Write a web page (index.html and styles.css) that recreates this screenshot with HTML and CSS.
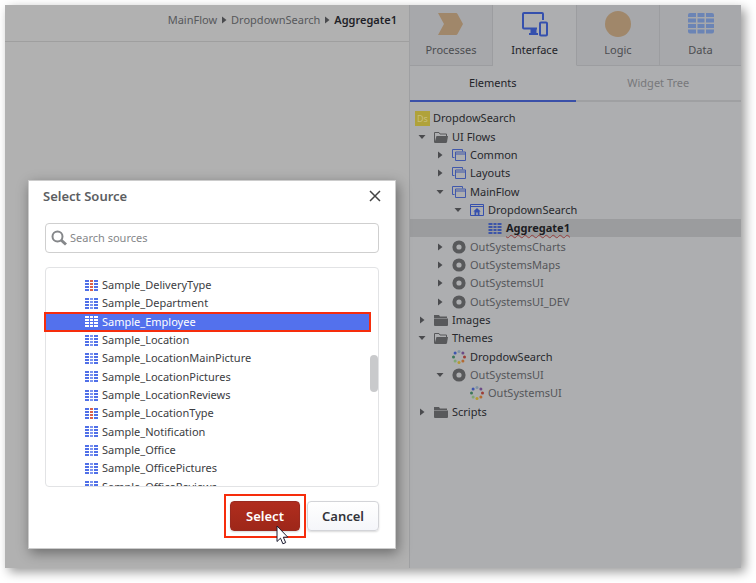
FILE: index.html
```html
<!DOCTYPE html>
<html lang="en">
<head>
    <meta charset="UTF-8">
    <meta name="viewport" content="width=device-width, initial-scale=1.0">
    <title>Select Source</title>
    <link rel="stylesheet" href="styles.css">
</head>
<body>
    <svg class="sprite" aria-hidden="true">
        <symbol id="right" viewBox="0 0 10 10"><path d="M3 1.5 7.5 5 3 8.5z" fill="currentColor"/></symbol>
        <symbol id="down" viewBox="0 0 10 10"><path d="M1.5 3h7L5 7z" fill="currentColor"/></symbol>
        <symbol id="folder" viewBox="0 0 14 14"><path d="M0 2h5l1 1.5h7V5H0zM0 5.5h14V12q0 1-1 1H1q-1 0-1-1z" fill="#58595b"/></symbol>
        <symbol id="folder-open" viewBox="0 0 14 14"><path d="M.5 12.500V2.500H5L6 4h6.500v2" fill="none" stroke="#58595b"/><path d="M2.500 6H14l-1 6q-.3 1-1.200 1H.5z" fill="#58595b"/></symbol>
        <symbol id="flow" viewBox="0 0 14 14"><path d="M2.500 9.500h-2v-8h10v2M3.500 4h10v8.500h-10zM3.500 6h10" fill="none" stroke="#4158ab"/></symbol>
        <symbol id="screen" viewBox="0 0 14 14"><path d="M.5 1.500h13v11H.5zM.5 3.500h13" fill="none" stroke="#3650ad"/><path d="M7 5 3.300 8.500h1.200V12h1.800V9.500h1.400V12h1.800V8.500h1.200z" fill="#3650ad"/></symbol>
        <symbol id="module" viewBox="0 0 14 14"><circle cx="7" cy="7" r="4.600" fill="none" stroke="#58595b" stroke-width="4"/></symbol>
        <symbol id="theme" viewBox="0 0 14 14">
            <circle cx="7" cy="1.500" r="1.500" fill="#8093a5"/><circle cx="10.900" cy="3.100" r="1.500" fill="#6c4b86"/>
            <circle cx="12.500" cy="7" r="1.500" fill="#9c3c35"/><circle cx="10.900" cy="10.900" r="1.500" fill="#b36a32"/>
            <circle cx="7" cy="12.500" r="1.500" fill="#b49a30"/><circle cx="3.100" cy="10.900" r="1.500" fill="#80a875"/>
            <circle cx="1.500" cy="7" r="1.500" fill="#3b7658"/><circle cx="3.100" cy="3.100" r="1.500" fill="#3d54ae"/>
        </symbol>
        <symbol id="grid" viewBox="0 0 13 11">
            <path d="M0 0h4v2H0zM9 0h4v2H9zM0 3h4v2H0zM9 3h4v2H9zM0 6h4v2H0zM9 6h4v2H9zM0 9h4v2H0zM9 9h4v2H9z" fill="currentColor"/>
            <path d="M5 0h3v2H5zM5 3h3v2H5zM5 6h3v2H5zM5 9h3v2H5z"/>
        </symbol>
    </svg>

    <div class="window">
        <main class="canvas">
            <nav class="breadcrumb" aria-label="Breadcrumb">
                <a href="#">MainFlow</a>
                <svg class="arrow"><use href="#right"/></svg>
                <a href="#">DropdownSearch</a>
                <svg class="arrow"><use href="#right"/></svg>
                <a href="#" class="current">Aggregate1</a>
            </nav>
        </main>

        <aside class="panel">
            <div class="layers">
                <button type="button" class="layer">
                    <svg width="28" height="26" viewBox="0 0 28 26"><path d="M1 2h18q1 0 1.500 1L26 13l-5.500 10q-.5 1-1.500 1H1l6-11z" fill="#a0876a"/></svg>
                    Processes
                </button>
                <button type="button" class="layer active">
                    <svg width="28" height="26" viewBox="0 0 28 26" fill="none" stroke="#3550ad" stroke-width="2"><path d="M16 17.500H3q-1 0-1-1V3q0-1 1-1h18q1 0 1 1v6M8 23h9M12.500 18v5M10.500 18v4M14.500 18v4"/><rect x="19" y="11.500" width="7" height="13" rx="1"/></svg>
                    Interface
                </button>
                <button type="button" class="layer">
                    <svg width="28" height="26" viewBox="0 0 28 26"><circle cx="14" cy="13" r="13" fill="#a0876a"/></svg>
                    Logic
                </button>
                <button type="button" class="layer">
                    <svg width="28" height="26" viewBox="0 0 28 26" fill="#6b84b5">
                        <path d="M3 2h6v4H1V4q0-2 2-2zM10.500 2h7v4h-7zM19 2h6q2 0 2 2v2h-8zM1 7.500h8v4H1zM10.500 7.500h7v4h-7zM19 7.500h8v4h-8zM1 13h8v4H1zM10.500 13h7v4h-7zM19 13h8v4h-8zM1 18.500h8v4H3q-2 0-2-2zM10.500 18.500h7v4h-7zM19 18.500h8v2q0 2-2 2h-6z"/>
                    </svg>
                    Data
                </button>
            </div>
            <div class="views">
                <button type="button" class="view active">Elements</button>
                <button type="button" class="view">Widget Tree</button>
            </div>

            <ul class="tree">
                <li class="root"><span class="app-icon">Ds</span>DropdowSearch</li>
                <li><svg class="arrow"><use href="#down"/></svg><svg class="icon"><use href="#folder-open"/></svg>UI Flows</li>
                <li class="level1"><svg class="arrow"><use href="#right"/></svg><svg class="icon"><use href="#flow"/></svg>Common</li>
                <li class="level1"><svg class="arrow"><use href="#right"/></svg><svg class="icon"><use href="#flow"/></svg>Layouts</li>
                <li class="level1"><svg class="arrow"><use href="#down"/></svg><svg class="icon"><use href="#flow"/></svg>MainFlow</li>
                <li class="level2"><svg class="arrow"><use href="#down"/></svg><svg class="icon"><use href="#screen"/></svg>DropdownSearch</li>
                <li class="level3 selected"><svg class="arrow"></svg><svg class="icon table"><use href="#grid"/></svg><span class="error">Aggregate1</span></li>
                <li class="level1 muted"><svg class="arrow"><use href="#right"/></svg><svg class="icon"><use href="#module"/></svg>OutSystemsCharts</li>
                <li class="level1 muted"><svg class="arrow"><use href="#right"/></svg><svg class="icon"><use href="#module"/></svg>OutSystemsMaps</li>
                <li class="level1 muted"><svg class="arrow"><use href="#right"/></svg><svg class="icon"><use href="#module"/></svg>OutSystemsUI</li>
                <li class="level1 muted"><svg class="arrow"><use href="#right"/></svg><svg class="icon"><use href="#module"/></svg>OutSystemsUI_DEV</li>
                <li><svg class="arrow"><use href="#right"/></svg><svg class="icon"><use href="#folder"/></svg>Images</li>
                <li><svg class="arrow"><use href="#down"/></svg><svg class="icon"><use href="#folder-open"/></svg>Themes</li>
                <li class="level1"><svg class="arrow"></svg><svg class="icon"><use href="#theme"/></svg>DropdowSearch</li>
                <li class="level1 muted"><svg class="arrow"><use href="#down"/></svg><svg class="icon"><use href="#module"/></svg>OutSystemsUI</li>
                <li class="level2 muted"><svg class="arrow"></svg><svg class="icon"><use href="#theme"/></svg>OutSystemsUI</li>
                <li><svg class="arrow"><use href="#right"/></svg><svg class="icon"><use href="#folder"/></svg>Scripts</li>
            </ul>
        </aside>

        <div class="dialog" role="dialog" aria-labelledby="dialog-title">
            <div class="dialog-header">
                <h1 id="dialog-title">Select Source</h1>
                <button type="button" class="close" aria-label="Close">
                    <svg width="12" height="12" viewBox="0 0 12 12"><path d="M1 1l10 10M11 1 1 11" stroke="#444" stroke-width="1.500"/></svg>
                </button>
            </div>
            <label class="search">
                <svg width="16" height="16" viewBox="0 0 16 16" fill="none" stroke="#85878a"><circle cx="6.500" cy="6.500" r="5" stroke-width="2"/><path d="M10 10l5 4.500" stroke-width="3"/></svg>
                <input type="text" placeholder="Search sources" aria-label="Search sources">
            </label>
            <div class="list">
                <ul class="sources" role="listbox" aria-label="Sources">
                    <li role="option" class="static"><svg class="table"><use href="#grid"/></svg>Sample_DeliveryType</li>
                    <li role="option"><svg class="table"><use href="#grid"/></svg>Sample_Department</li>
                    <li role="option" class="selected" aria-selected="true"><svg class="table"><use href="#grid"/></svg>Sample_Employee</li>
                    <li role="option"><svg class="table"><use href="#grid"/></svg>Sample_Location</li>
                    <li role="option"><svg class="table"><use href="#grid"/></svg>Sample_LocationMainPicture</li>
                    <li role="option"><svg class="table"><use href="#grid"/></svg>Sample_LocationPictures</li>
                    <li role="option"><svg class="table"><use href="#grid"/></svg>Sample_LocationReviews</li>
                    <li role="option" class="static"><svg class="table"><use href="#grid"/></svg>Sample_LocationType</li>
                    <li role="option"><svg class="table"><use href="#grid"/></svg>Sample_Notification</li>
                    <li role="option"><svg class="table"><use href="#grid"/></svg>Sample_Office</li>
                    <li role="option"><svg class="table"><use href="#grid"/></svg>Sample_OfficePictures</li>
                    <li role="option"><svg class="table"><use href="#grid"/></svg>Sample_OfficeReviews</li>
                </ul>
                <span class="thumb"></span>
            </div>
            <div class="actions">
                <div class="highlight">
                    <button type="button" class="btn primary">Select</button>
                    <svg class="cursor" width="13" height="20" viewBox="0 0 13 20"><path d="M1 1v15.500l3.500-3.300 2.400 5.600 2.800-1.200-2.400-5.400h4.500z" fill="#fff" stroke="#1c1c30"/></svg>
                </div>
                <button type="button" class="btn">Cancel</button>
            </div>
        </div>
    </div>
</body>
</html>
```
FILE: styles.css
```css
* {
    box-sizing: border-box;
}
body {
    margin: 0;
    padding: 5px 15px 15px 5px;
    min-height: 100vh;
    display: flex;
    background: #fff;
    color: #27282c;
    font-family: "Noto Sans", "Open Sans", sans-serif;
    font-size: 11px;
    line-height: 18px;
}
button, input {
    font: inherit;
    color: inherit;
}
ul {
    list-style: none;
    margin: 0;
    padding: 0;
}
.sprite {
    position: absolute;
    width: 0;
    height: 0;
}
.window {
    position: relative;
    flex: 1;
    display: grid;
    grid-template-columns: 404fr 332fr;
    background: #b1b1b1;
    box-shadow: 4px 4px 10px rgba(0,0,0,0.4);
}
.arrow {
    flex: none;
    width: 10px;
    height: 10px;
    color: #4a4b4e;
}

/* canvas */
.breadcrumb {
    display: flex;
    justify-content: flex-end;
    align-items: center;
    gap: 2px;
    height: 37px;
    padding: 0 12px 6px;
    border-bottom: 1px solid #9f9f9f;
}
.breadcrumb a {
    color: #57585b;
    text-decoration: none;
}
.breadcrumb .current {
    color: #1f1f28;
    font-weight: 600;
}

/* side panel */
.panel {
    background: #adaeb0;
    border-left: 1px solid #9fa0a2;
}
.layers {
    display: grid;
    grid-template-columns: 83fr 84fr 83fr 81fr;
}
.views {
    display: grid;
    grid-template-columns: 1fr 1fr;
}
.layer {
    display: flex;
    flex-direction: column;
    align-items: center;
    gap: 4px;
    height: 61px;
    padding: 6px 0 0;
    border: 0;
    border-right: 1px solid #9c9da0;
    border-bottom: 1px solid #9c9da0;
    background: #a7a8ab;
    color: #4c4d50;
}
.layer:last-child {
    border-right: 0;
}
.layer.active {
    background: #adaeb0;
    border-bottom-color: #adaeb0;
    color: #232328;
}
.view {
    height: 36px;
    padding: 0;
    border: 0;
    border-bottom: 2px solid #9fa0a2;
    background: none;
    color: #77787b;
}
.view.active {
    border-bottom-color: #3a50a8;
    color: #232328;
}
.tree {
    display: grid;
    grid-auto-rows: 1fr;
    height: 312px;
    margin-top: 7px;
}
.tree li {
    display: flex;
    align-items: center;
    padding-left: 7px;
    white-space: nowrap;
}
.tree .root {
    padding-left: 5px;
}
.tree .level1 {
    padding-left: 25px;
}
.tree .level2 {
    padding-left: 43px;
}
.tree .level3 {
    padding-left: 61px;
}
.tree .muted {
    color: #55565a;
}
.tree .selected {
    background: #9b9c9e;
    color: #1c1c22;
    font-weight: bold;
}
.icon {
    flex: none;
    width: 14px;
    height: 14px;
    margin: 0 4px 0 7px;
}
.app-icon {
    width: 15px;
    height: 15px;
    margin-right: 3px;
    background: #b0a23a;
    color: #c9bf7c;
    font-size: 9px;
    line-height: 15px;
    text-align: center;
}
.error {
    text-decoration: underline wavy #963f3c 1px;
    text-underline-offset: 2px;
}
.table {
    flex: none;
    width: 13px;
    height: 11px;
    color: #5070e8;
    fill: #7d95f0;
}
.tree .table {
    width: 14px;
    color: #3d55a8;
    fill: #3d55a8;
}

/* dialog */
.dialog {
    position: absolute;
    left: 23px;
    top: 175px;
    width: 50%;
    padding: 0 16px 10px;
    background: #fff;
    border: 1px solid #ccc;
    box-shadow: 2px 4px 12px rgba(0,0,0,0.4);
}
.dialog-header {
    display: flex;
    align-items: center;
    justify-content: space-between;
    height: 42px;
    margin-left: -2px;
    padding-bottom: 12px;
}
.dialog-header h1 {
    margin: 0;
    color: #5c5e62;
    font-size: 13px;
    font-weight: 600;
}
.close {
    display: flex;
    padding: 0;
    margin-right: -2px;
    border: 0;
    background: none;
}
.search {
    display: flex;
    align-items: center;
    gap: 3px;
    height: 30px;
    padding: 0 5px;
    border: 1px solid #cfcfcf;
    border-radius: 4px;
}
.search input {
    flex: 1;
    min-width: 0;
    padding: 0;
    border: 0;
    outline: 0;
    background: none;
}
.search input::placeholder {
    color: #85878a;
}
.list {
    position: relative;
    height: 220px;
    margin-top: 14px;
    padding-top: 8px;
    border: 1px solid #e2e3e5;
    border-radius: 4px;
    overflow-x: visible;
    overflow-y: clip;
}
.sources {
    display: grid;
    grid-auto-rows: 1fr;
    height: 220px;
    margin-right: 8px;
}
.sources li {
    display: flex;
    align-items: center;
    gap: 4px;
    margin-left: -1px;
    padding-left: 40px;
    color: #3c3d42;
}
.sources .static .table {
    fill: #d8604c;
}
.sources .selected {
    background: #5371ed;
    color: #fff;
    outline: 2px solid #f62d0c;
    outline-offset: -1px;
}
.sources .selected .table {
    color: #fff;
    fill: #fff;
}
.thumb {
    position: absolute;
    right: 0;
    top: 87px;
    width: 8px;
    height: 37px;
    border-radius: 4px;
    background: #c9cacc;
}
.actions {
    display: flex;
    justify-content: flex-end;
    align-items: center;
    gap: 1px;
    margin-top: 7px;
}
.highlight {
    position: relative;
    padding: 5px 4px;
    border: 2px solid #f62d0c;
}
.btn {
    height: 30px;
    min-width: 72px;
    padding: 0;
    border: 1px solid #d3d4d8;
    border-radius: 4px;
    background: linear-gradient(#fff, #f5f6fa);
    box-shadow: 0 1px 2px rgba(0,0,0,0.15);
    color: #33343a;
    font-size: 13px;
    font-weight: 600;
}
.btn.primary {
    min-width: 70px;
    border-color: #9a2a20;
    background: linear-gradient(#b02d1e, #9e2719);
    color: #fff;
}
.cursor {
    position: absolute;
    left: 50px;
    top: 29px;
}
```
